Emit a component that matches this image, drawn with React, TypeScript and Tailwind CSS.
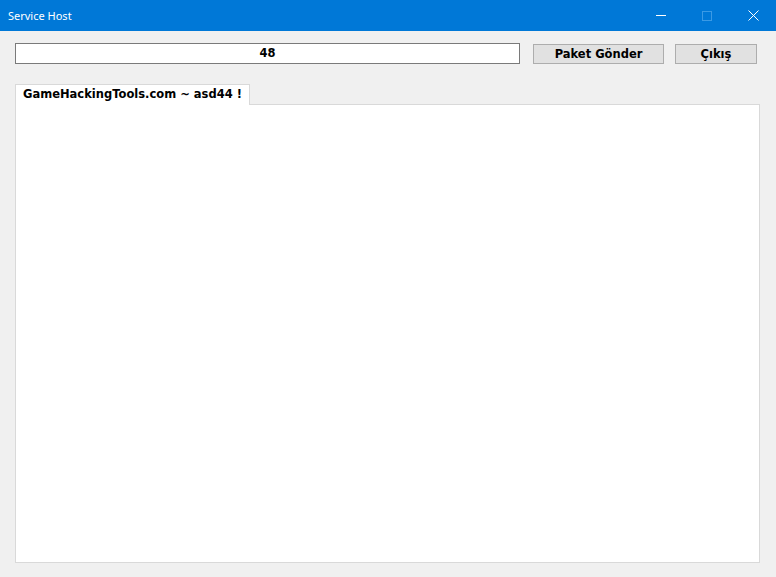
import React from 'react';

const tahoma = { fontFamily: '"DejaVu Sans", Verdana, sans-serif' };

export default function App() {
  return (
    <div className="w-[776px] h-[577px] bg-[#f0f0f0] flex flex-col overflow-hidden">
      {/* Title bar */}
      <div className="h-[31px] bg-[#0078d7] flex items-center text-white shrink-0">
        <span className="pl-[8px] pt-[2px] text-[11px]" style={{ fontFamily: '"Noto Sans", "Open Sans", sans-serif' }}>
          Service Host
        </span>
        <div className="ml-auto flex h-full">
          <div className="w-[46px] h-full flex items-center justify-center">
            <div className="w-[10px] h-px bg-white" />
          </div>
          <div className="w-[46px] h-full flex items-center justify-center">
            <div className="w-[10px] h-[10px] border border-[#3b9ae5]" />
          </div>
          <div className="w-[46px] h-full flex items-center justify-center">
            <svg width="11" height="11" viewBox="0 0 11 11">
              <path d="M0.5 0.5 L10.5 10.5 M10.5 0.5 L0.5 10.5" stroke="white" strokeWidth="1" />
            </svg>
          </div>
        </div>
      </div>

      {/* Toolbar */}
      <div className="flex items-start pl-[15px] pt-[12px]" style={tahoma}>
        <div className="w-[505px] h-[21px] border border-[#7a7a7a] bg-white flex items-center justify-center text-[11.5px] font-bold text-black">
          48
        </div>
        <button className="ml-[13px] mt-[1px] w-[131px] h-[20px] pt-[2px] border border-[#adadad] bg-[#e1e1e1] text-[11.5px] font-bold text-black flex items-center justify-center">
          Paket Gönder
        </button>
        <button className="ml-[11px] mt-[1px] w-[82px] h-[20px] pt-[2px] border border-[#adadad] bg-[#e1e1e1] text-[11.5px] font-bold text-black flex items-center justify-center">
          Çıkış
        </button>
      </div>

      {/* Tab control */}
      <div className="pl-[15px] pt-[20px] flex flex-col" style={tahoma}>
        <div className="w-[235px] h-[21px] bg-white border border-b-0 border-[#d9d9d9] flex items-center pl-[7px] text-[11.5px] font-bold text-black relative z-10 -mb-px">
          GameHackingTools.com ~ asd44 !
        </div>
        <div className="w-[745px] h-[459px] bg-white border border-[#d9d9d9]" />
      </div>
    </div>
  );
}
